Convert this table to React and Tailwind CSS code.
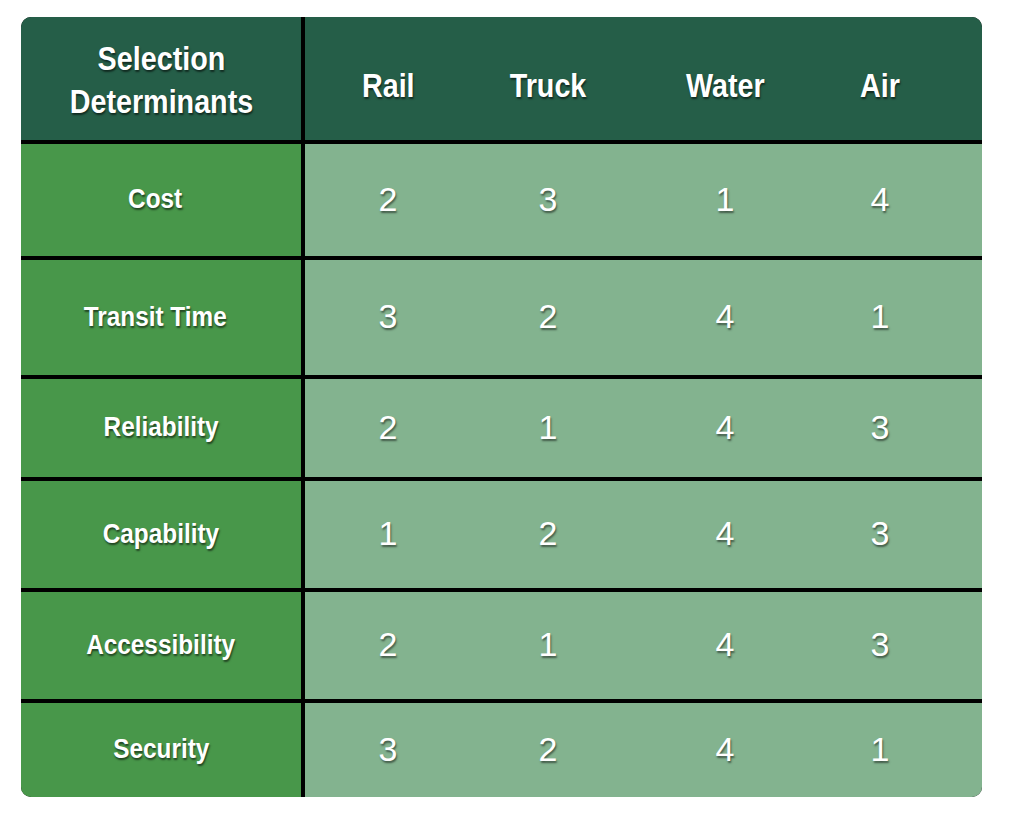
import React from "react";

const rows = [
  { label: "Cost", h: "h-[112px]", shift: "pr-[12px]", v: [2, 3, 1, 4] },
  { label: "Transit Time", h: "h-[115px]", shift: "pr-[12px]", v: [3, 2, 4, 1] },
  { label: "Reliability", h: "h-[98px]", shift: "", v: [2, 1, 4, 3] },
  { label: "Capability", h: "h-[107px]", shift: "", v: [1, 2, 4, 3] },
  { label: "Accessibility", h: "h-[107px]", shift: "", v: [2, 1, 4, 3] },
  { label: "Security", h: "h-[94px]", shift: "", v: [3, 2, 4, 1] },
];

const cond =
  "font-['Liberation_Sans',Arial,sans-serif] font-bold text-white [text-shadow:1px_2px_2px_rgba(0,0,0,0.55)]";
const num =
  "font-['Liberation_Sans',Arial,sans-serif] text-white text-[34px] [text-shadow:1px_2px_2px_rgba(0,0,0,0.5)]";

function Narrow({ children }) {
  return <span className="inline-block scale-x-[0.87] origin-center whitespace-nowrap">{children}</span>;
}

export default function App() {
  return (
    <div className="w-[1036px] h-[814px] bg-white pt-[17px] pl-[21px]">
      <div className="w-[961px] rounded-[10px] overflow-hidden bg-black flex flex-col gap-[4px]">
        <div className="flex h-[123px] gap-[4px]">
          <div className={`w-[280px] bg-[#255e48] flex items-center justify-center text-center text-[33px] leading-[43px] pt-[2px] ${cond}`}>
            <Narrow>
              Selection
              <br />
              Determinants
            </Narrow>
          </div>
          <div className={`flex-1 bg-[#255e48] grid grid-cols-[166px_154px_200px_110px] items-center pt-[14px] text-[33px] ${cond}`}>
            <div className="text-center"><Narrow>Rail</Narrow></div>
            <div className="text-center"><Narrow>Truck</Narrow></div>
            <div className="text-center"><Narrow>Water</Narrow></div>
            <div className="text-center"><Narrow>Air</Narrow></div>
          </div>
        </div>
        {rows.map((r) => (
          <div key={r.label} className={`flex gap-[4px] ${r.h}`}>
            <div className={`w-[280px] bg-[#48974a] flex items-center justify-center text-[28px] pb-[2px] ${r.shift} ${cond}`}>
              <Narrow>{r.label}</Narrow>
            </div>
            <div className={`flex-1 bg-[#83b38f] grid grid-cols-[166px_154px_200px_110px] items-center pb-[2px] ${num}`}>
              {r.v.map((n, i) => (
                <div key={i} className="text-center">
                  {n}
                </div>
              ))}
            </div>
          </div>
        ))}
      </div>
    </div>
  );
}
